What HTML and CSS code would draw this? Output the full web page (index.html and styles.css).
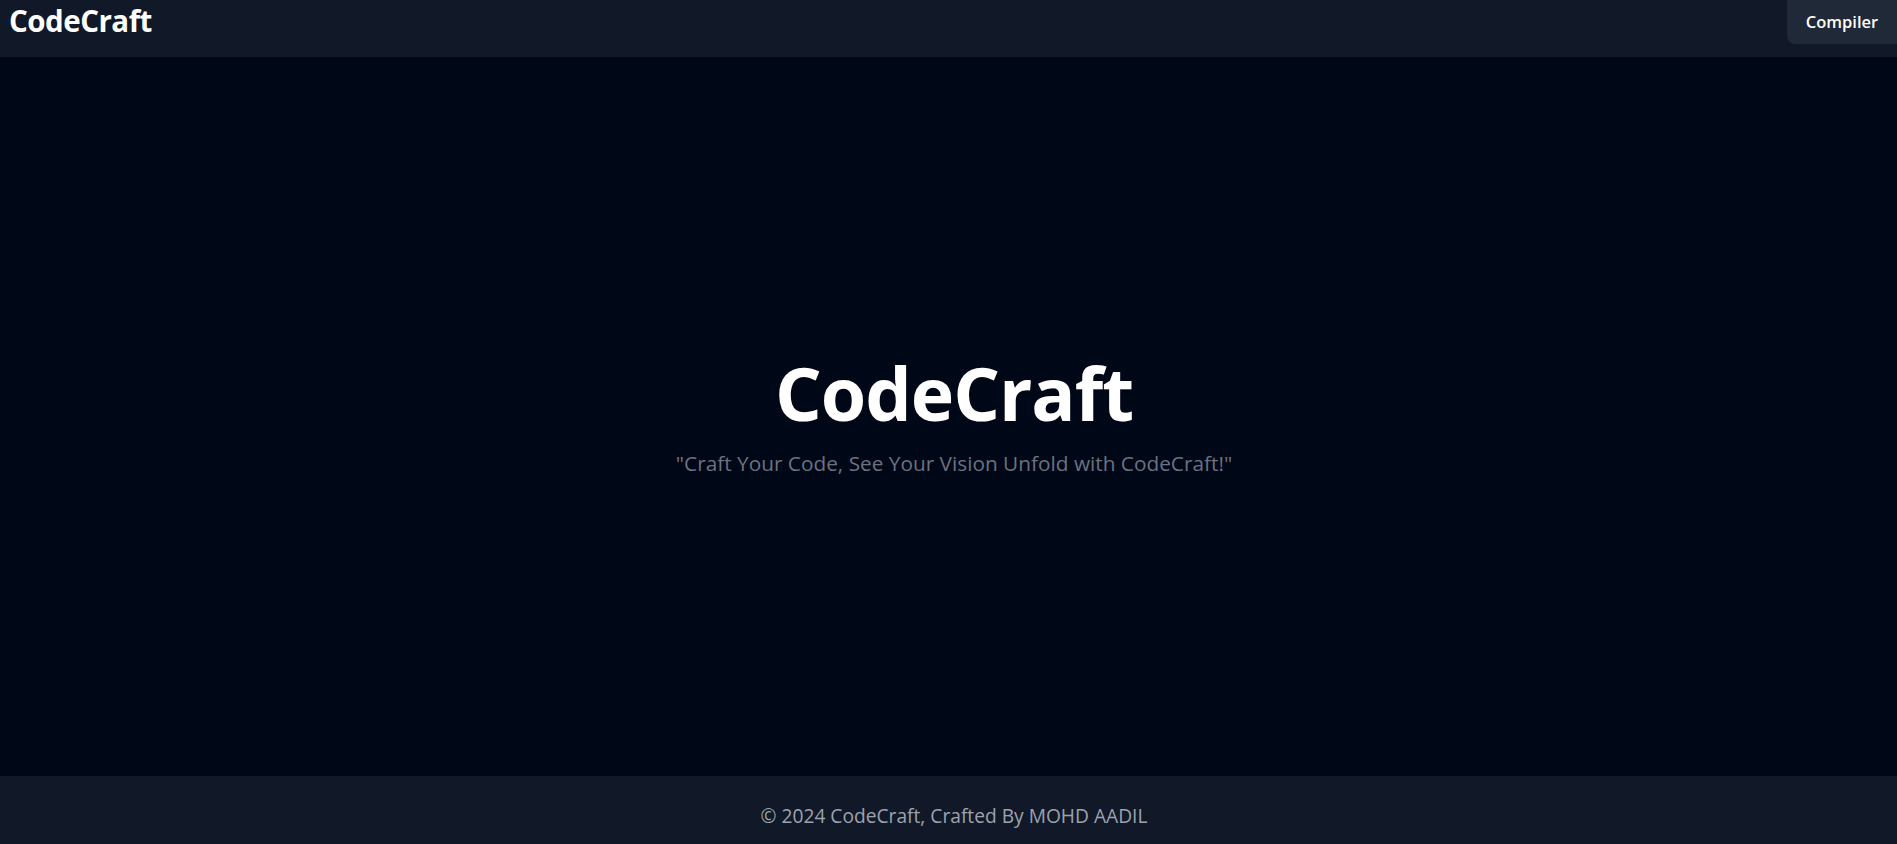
FILE: index.html
```html
<!DOCTYPE html>
<html>
<head>
<meta charset="utf-8">
<link rel="stylesheet" href="styles.css">
</head>
<body>
<div class="page">
  <header class="topbar">
    <div class="logo">CodeCraft</div>
    <a class="nav-btn" href="#">Compiler</a>
  </header>
  <main class="hero">
    <h1 class="hero-title">CodeCraft</h1>
    <p class="hero-sub">"Craft Your Code, See Your Vision Unfold with CodeCraft!"</p>
  </main>
  <footer class="footer">© 2024 CodeCraft, Crafted By MOHD AADIL</footer>
</div>
</body>
</html>
```
FILE: styles.css
```css
html, body {
  margin: 0;
  padding: 0;
  height: 100%;
  background: #000717;
  font-family: "Open Sans", "Noto Sans", sans-serif;
}
.page {
  display: flex;
  flex-direction: column;
  height: 844px;
}
.topbar {
  height: 57px;
  flex: none;
  background: #111827;
  display: flex;
  justify-content: space-between;
  align-items: flex-start;
  padding-left: 9px;
}
.logo {
  color: #fff;
  font-weight: 700;
  font-size: 29.5px;
  line-height: 42px;
  letter-spacing: -0.5px;
}
.nav-btn {
  background: #1f2937;
  color: #fff;
  text-decoration: none;
  font-weight: 600;
  font-size: 16.5px;
  height: 42px;
  padding-bottom: 2px;
  width: 110px;
  display: flex;
  align-items: center;
  justify-content: center;
  border-bottom-left-radius: 8px;
}
.hero {
  flex: 1;
  display: flex;
  flex-direction: column;
  align-items: center;
  justify-content: center;
  padding-left: 11px;
  background: #000717;
}
.hero-title {
  margin: 0;
  color: #fff;
  font-weight: 700;
  font-size: 73.5px;
  line-height: 1;
  letter-spacing: -1px;
}
.hero-sub {
  margin: 20px 0 0;
  color: #6b7280;
  font-size: 20.8px;
}
.footer {
  height: 58px;
  padding-top: 10px;
  padding-left: 11px;
  flex: none;
  background: #111827;
  color: #9ca3af;
  font-size: 19.2px;
  display: flex;
  align-items: center;
  justify-content: center;
}
```
